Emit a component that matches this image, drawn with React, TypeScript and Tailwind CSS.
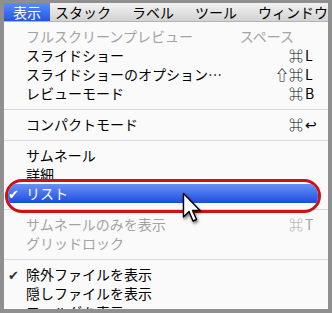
import React from 'react';

type Item =
  | { sep: true }
  | { label: string; mod?: string; key_?: string; disabled?: boolean; checked?: boolean; selected?: boolean };

const items: Item[] = [
  { label: 'フルスクリーンプレビュー', mod: 'スペース', key_: '', disabled: true },
  { label: 'スライドショー', mod: '⌘', key_: 'L' },
  { label: 'スライドショーのオプション…', mod: '⇧⌘', key_: 'L' },
  { label: 'レビューモード', mod: '⌘', key_: 'B' },
  { sep: true },
  { label: 'コンパクトモード', mod: '⌘', key_: '↩' },
  { sep: true },
  { label: 'サムネール' },
  { label: '詳細' },
  { label: 'リスト', checked: true, selected: true },
  { sep: true },
  { label: 'サムネールのみを表示', mod: '⌘', key_: 'T', disabled: true },
  { label: 'グリッドロック', disabled: true },
  { sep: true },
  { label: '除外ファイルを表示', checked: true },
  { label: '隠しファイルを表示' },
  { label: 'フォルダを表示', checked: true },
];

const menus = [
  { label: '表示', cls: 'ml-0 px-[9px]', active: true },
  { label: 'スタック', cls: 'ml-[5px]' },
  { label: 'ラベル', cls: 'ml-[21px]' },
  { label: 'ツール', cls: 'ml-[21px]' },
  { label: 'ウィンドウ', cls: 'ml-[21px]' },
];

function Cursor() {
  return (
    <svg width="20" height="32" viewBox="0 0 20 32" className="drop-shadow-[1px_2px_1.5px_rgba(0,0,0,0.55)]">
      <path
        d="M1.5 1.5 L1.5 25 L7 19.5 L11 29 L14.5 27.5 L10.5 18.5 L18 18.5 Z"
        fill="#fff"
        stroke="#000"
        strokeWidth="1.4"
        strokeLinejoin="round"
      />
    </svg>
  );
}

function Row({ item }: { item: Exclude<Item, { sep: true }> }) {
  const color = item.selected ? 'text-white' : item.disabled ? 'text-[#a3a3a3]' : 'text-black';
  return (
    <div className={`relative flex h-[19px] items-center leading-[19px] ${color}`}>
      {item.selected && (
        <div className="absolute left-px right-[7px] top-[-5px] h-[34px] overflow-hidden rounded-full border-[3px] border-[#cc1212]">
          <div className="mt-[2px] h-[19px] bg-gradient-to-b from-[#6a90f6] to-[#1c4be0]" />
        </div>
      )}
      <span className={`relative w-[22px] pl-[4px] text-[13px] ${item.selected ? 'text-white' : 'text-[#333]'}`}>
        {item.checked ? '✔' : ''}
      </span>
      <span className="relative flex-1">{item.label}</span>
      {item.mod !== undefined && (
        <span className="relative flex">
          <span className="text-right">{item.mod}</span>
          <span className={item.mod === 'スペース' ? 'w-[34px]' : 'w-[25px] pl-[2px]'}>{item.key_}</span>
        </span>
      )}
    </div>
  );
}

export default function App() {
  return (
    <div className="h-[313px] w-[332px] overflow-hidden bg-[#8f8f8f] pb-[4px] pl-[4px] pr-[4px] pt-[3px] font-['Noto_Sans_CJK_JP','DejaVu_Sans',sans-serif] text-[14px]">
      <div className="relative flex h-full flex-col overflow-hidden bg-[#fafafa]">
        {/* menubar */}
        <div className="flex h-[19px] shrink-0 items-stretch border-b border-[#b5b5b5] bg-gradient-to-b from-[#f2f2f2] to-[#d2d2d2] leading-[19px]">
          {menus.map(m => (
            <div
              key={m.label}
              className={`${m.cls} ${m.active ? 'bg-gradient-to-b from-[#5f8af6] to-[#2454e6] text-white' : 'text-black'}`}
            >
              {m.label}
            </div>
          ))}
        </div>

        {/* menu */}
        <div className="pt-[5px]">
          {items.map((it, i) =>
            'sep' in it ? (
              <div key={i} className="flex h-[12px] items-center">
                <div className="h-px w-full bg-[#d9d9d9]" />
              </div>
            ) : (
              <Row key={i} item={it} />
            )
          )}
        </div>

        <div className="absolute left-[178px] top-[189px]">
          <Cursor />
        </div>
      </div>
    </div>
  );
}
